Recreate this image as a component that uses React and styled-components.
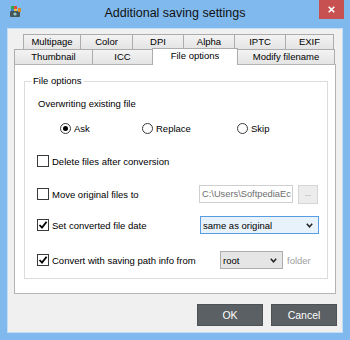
import React from 'react';
import styled, { createGlobalStyle } from 'styled-components';

const GlobalStyle = createGlobalStyle`
  html, body { margin: 0; padding: 0; background: #fff; }
  body { font-family: "Liberation Sans", Arial, sans-serif; }
  *, *::before, *::after { box-sizing: border-box; }
`;

const Window = styled.div`
  width: 350px;
  height: 340px;
  background: #80b9ee;
  padding: 0 7px 7px;
  display: flex;
  flex-direction: column;
`;

const TitleBar = styled.div`
  height: 28px;
  flex: none;
  display: grid;
  grid-template-columns: 1fr auto 1fr;
  align-items: start;
`;

const AppIcon = styled.svg`
  margin: 5px 0 0 2px;
  display: block;
`;

const Title = styled.div`
  font-size: 12.5px;
  line-height: 26px;
  color: #111;
  white-space: nowrap;
`;

const CloseButton = styled.div`
  justify-self: end;
  width: 25px;
  height: 19px;
  margin-right: -1px;
  background: #c75050;
  display: flex;
  align-items: center;
  justify-content: center;
`;

const Client = styled.div`
  flex: 1;
  display: flex;
  flex-direction: column;
  background: #f0f0f0;
  border: 1px solid #c4def6;
`;

const TabArea = styled.div`
  flex: 1;
  display: flex;
  flex-direction: column;
  margin: 5px 6px 0 6px;
`;

const TabRow = styled.div`
  display: flex;
  height: 15px;
  padding-left: ${p => p.$indent || 0}px;
`;

const Tab = styled.div`
  width: ${p => p.$w}px;
  height: ${p => (p.$active ? 17 : 15)}px;
  margin-top: ${p => (p.$active ? -1 : 0)}px;
  margin-right: -1px;
  border: 1px solid #acacac;
  border-bottom: none;
  background: ${p => (p.$active ? '#fff' : 'linear-gradient(#f3f3f3, #e4e4e4)')};
  font-size: 9.5px;
  line-height: ${p => (p.$active ? 13 : 14)}px;
  text-align: center;
  color: #000;
  white-space: nowrap;
  position: relative;
  z-index: ${p => (p.$active ? 2 : 0)};
`;

const Panel = styled.div`
  flex: 1;
  background: #fff;
  border: 1px solid #b4b4b4;
  padding: 10px 7px 12px 9px;
  display: flex;
  flex-direction: column;
`;

const Group = styled.fieldset`
  margin: 0;
  min-width: 0;
  border: 1px solid #dcdcdc;
  padding: 6px 9px 8px 12px;
  display: flex;
  flex-direction: column;
`;

const GroupTitle = styled.legend`
  font-size: 9.5px;
  line-height: 12px;
  padding: 0 2px;
  margin-left: -6px;
  color: #000;
`;

const Row = styled.div`
  display: flex;
  align-items: center;
  height: 20px;
  margin-top: ${p => p.$gap || 0}px;
  padding-left: ${p => p.$indent || 0}px;
  font-size: 9.5px;
  color: #000;
  white-space: nowrap;
`;

const RadioGrid = styled.div`
  display: grid;
  grid-template-columns: 82px 95px auto;
  align-items: center;
`;

const RadioItem = styled.div`
  display: flex;
  align-items: center;
  gap: 3px;
`;

const RadioCircle = styled.span`
  width: 11px;
  height: 11px;
  border-radius: 50%;
  border: 1px solid #3a3a3a;
  background: #fff;
  display: flex;
  align-items: center;
  justify-content: center;
  &::after {
    content: '';
    width: 5px;
    height: 5px;
    border-radius: 50%;
    background: ${p => (p.$on ? '#000' : 'transparent')};
  }
`;

const CheckLabel = styled.div`
  display: flex;
  align-items: center;
  gap: 3px;
  width: ${p => (p.$w ? `${p.$w}px` : 'auto')};
  flex: none;
`;

const CheckBox = styled.span`
  width: 12px;
  height: 12px;
  border: 1px solid #3a3a3a;
  background: #fff;
  display: flex;
  align-items: center;
  justify-content: center;
`;

const TextBox = styled.div`
  width: 94px;
  height: 18px;
  flex: none;
  border: 1px solid #cfcfcf;
  background: #fff;
  color: #6d6d6d;
  padding-left: 2px;
  line-height: 16px;
  font-size: 9.3px;
  overflow: hidden;
  white-space: nowrap;
`;

const BrowseButton = styled.div`
  width: 20px;
  height: 19px;
  flex: none;
  margin-left: 5px;
  border: 1px solid #d6d6d6;
  background: #ececec;
  color: #8a8a8a;
  font-size: 8px;
  line-height: 15px;
  text-align: center;
`;

const Select = styled.div`
  width: ${p => p.$w}px;
  height: 18px;
  flex: none;
  border: 1px solid ${p => (p.$focus ? '#569de5' : '#acacac')};
  background: ${p => (p.$focus ? '#e8f2fb' : '#e5e5e5')};
  display: flex;
  align-items: center;
  justify-content: space-between;
  padding: 0 5px 0 2px;
  color: #000;
`;

const Muted = styled.span`
  margin-left: 4px;
  color: #a0a0a0;
`;

const ButtonRow = styled.div`
  flex: none;
  display: flex;
  justify-content: flex-end;
  gap: 8px;
  padding: 10px 5px 6px 0;
`;

const DialogButton = styled.div`
  width: 66px;
  height: 22px;
  background: #5a6063;
  border: 1px solid #4d5255;
  color: #fff;
  font-size: 10.5px;
  line-height: 20px;
  text-align: center;
`;

const Chevron = () => (
  <svg width="7" height="5" viewBox="0 0 7 5">
    <polyline points="0.8,0.8 3.5,3.8 6.2,0.8" fill="none" stroke="#222" strokeWidth="1.5" />
  </svg>
);

const Check = () => (
  <svg width="10" height="10" viewBox="0 0 10 10">
    <polyline points="1.5,5 4,7.6 8.6,1.8" fill="none" stroke="#000" strokeWidth="1.8" />
  </svg>
);

const Checkbox = ({ checked, label, w }) => (
  <CheckLabel $w={w}>
    <CheckBox>{checked && <Check />}</CheckBox>
    <span>{label}</span>
  </CheckLabel>
);

const Radio = ({ on, label }) => (
  <RadioItem>
    <RadioCircle $on={on} />
    <span>{label}</span>
  </RadioItem>
);

const row1 = [
  ['Multipage', 58],
  ['Color', 53],
  ['DPI', 52],
  ['Alpha', 52],
  ['IPTC', 52],
  ['EXIF', 49],
];
const row2 = [
  ['Thumbnail', 79],
  ['ICC', 61],
  ['File options', 86, true],
  ['Modify filename', 98],
];

export default function App() {
  return (
    <>
      <GlobalStyle />
      <Window>
        <TitleBar>
          <AppIcon width="13" height="13" viewBox="0 0 13 13">
            <rect x="1" y="6" width="10" height="6" rx="1" fill="#46555a" />
            <rect x="2" y="1" width="3" height="3" fill="#2fa84f" />
            <rect x="5" y="1" width="3" height="3" fill="#e04a3a" />
            <rect x="2" y="4" width="3" height="2" fill="#3f7fd6" />
            <rect x="5" y="4" width="3" height="2" fill="#f0c23a" />
            <rect x="9" y="3" width="3" height="4" fill="#d88a2a" />
            <circle cx="6" cy="9" r="1.6" fill="#8fd0c8" />
          </AppIcon>
          <Title>Additional saving settings</Title>
          <CloseButton>
            <svg width="7" height="7" viewBox="0 0 7 7">
              <path d="M0.7 0.7 L6.3 6.3 M6.3 0.7 L0.7 6.3" stroke="#fff" strokeWidth="1.6" />
            </svg>
          </CloseButton>
        </TitleBar>
        <Client>
          <TabArea>
            <TabRow $indent={9}>
              {row1.map(([t, w]) => (
                <Tab key={t} $w={w}>{t}</Tab>
              ))}
            </TabRow>
            <TabRow>
              {row2.map(([t, w, a]) => (
                <Tab key={t} $w={w} $active={a}>{t}</Tab>
              ))}
            </TabRow>
            <Panel>
              <Group>
                <GroupTitle>File options</GroupTitle>
                <Row $indent={1}>Overwriting existing file</Row>
                <Row $gap={5} $indent={23}>
                  <RadioGrid>
                    <Radio on label="Ask" />
                    <Radio label="Replace" />
                    <Radio label="Skip" />
                  </RadioGrid>
                </Row>
                <Row $gap={13}>
                  <Checkbox label="Delete files after conversion" />
                </Row>
                <Row $gap={13}>
                  <Checkbox label="Move original files to" w={162} />
                  <TextBox>{'C:\\Users\\SoftpediaEc'}</TextBox>
                  <BrowseButton>...</BrowseButton>
                </Row>
                <Row $gap={11}>
                  <Checkbox checked label="Set converted file date" w={163} />
                  <Select $w={119} $focus>
                    <span>same as original</span>
                    <Chevron />
                  </Select>
                </Row>
                <Row $gap={15}>
                  <Checkbox checked label="Convert with saving path info from" w={183} />
                  <Select $w={63}>
                    <span>root</span>
                    <Chevron />
                  </Select>
                  <Muted>folder</Muted>
                </Row>
              </Group>
            </Panel>
          </TabArea>
          <ButtonRow>
            <DialogButton>OK</DialogButton>
            <DialogButton>Cancel</DialogButton>
          </ButtonRow>
        </Client>
      </Window>
    </>
  );
}
